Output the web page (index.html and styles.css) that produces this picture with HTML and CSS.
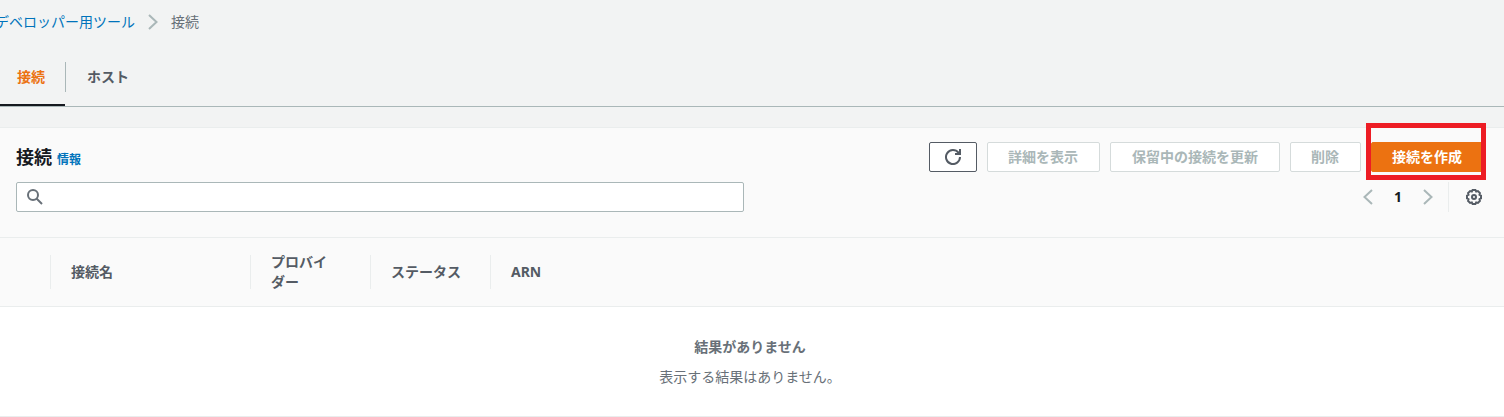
FILE: index.html
```html
<!DOCTYPE html>
<html lang="ja">
<head>
<meta charset="utf-8">
<title>接続</title>
<link rel="stylesheet" href="styles.css">
</head>
<body>
<nav class="breadcrumb" aria-label="パンくずリスト">
  <a href="#tools">デベロッパー用ツール</a>
  <svg class="breadcrumb-arrow" viewBox="0 0 10 16" aria-hidden="true"><path d="M1 1 8.500 8 1 15"/></svg>
  <span>接続</span>
</nav>
<nav class="tabs">
  <a class="tab tab-active" href="#connections" aria-current="page"><span>接続</span></a>
  <a class="tab" href="#hosts"><span>ホスト</span></a>
</nav>
<main class="panel">
  <header class="panel-header">
    <div class="title-row">
      <div class="title">
        <h1>接続</h1>
        <a href="#info">情報</a>
      </div>
      <div class="actions">
        <button class="btn btn-icon" type="button" aria-label="更新">
          <svg class="icon" viewBox="0 0 16 16" aria-hidden="true"><path d="M10 5h5V0M15 8a7 7 0 1 1-1.500-4.300L15 5"/></svg>
        </button>
        <button class="btn" type="button" disabled>詳細を表示</button>
        <button class="btn btn-wide" type="button" disabled>保留中の接続を更新</button>
        <button class="btn" type="button" disabled>削除</button>
        <div class="highlight">
          <button class="btn btn-primary" type="button">接続を作成</button>
        </div>
      </div>
    </div>
    <div class="filter-row">
      <label class="search">
        <svg class="search-icon" viewBox="0 0 16 16" aria-hidden="true"><circle cx="6" cy="6" r="5"/><path d="m9.500 9.500 5.500 5.500"/></svg>
        <input type="search" aria-label="接続を検索">
      </label>
      <div class="pager">
        <button class="pager-btn" type="button" aria-label="前のページ" disabled><svg viewBox="0 0 10 16" aria-hidden="true"><path d="M9 1 1.500 8 9 15"/></svg></button>
        <button class="pager-btn pager-page" type="button">1</button>
        <button class="pager-btn" type="button" aria-label="次のページ" disabled><svg viewBox="0 0 10 16" aria-hidden="true"><path d="M1 1 8.500 8 1 15"/></svg></button>
        <button class="settings" type="button" aria-label="設定">
          <svg class="icon" viewBox="0 0 16 16" aria-hidden="true"><path d="M6.600 1h2.800l.8 1.500 1.700-.4 2 2-.4 1.700 1.500.8v2.800l-1.500.8.4 1.700-2 2-1.700-.4-.8 1.500H6.600l-.8-1.500-1.700.4-2-2 .4-1.700L1 9.400V6.600l1.500-.8-.4-1.700 2-2 1.700.4z"/><circle cx="8" cy="8" r="2"/></svg>
        </button>
      </div>
    </div>
  </header>
  <table class="table">
    <thead>
      <tr>
        <td class="col-select"></td>
        <th class="col-name" scope="col">接続名</th>
        <th class="col-small" scope="col">プロバイ<wbr>ダー</th>
        <th class="col-small" scope="col">ステータス</th>
        <th scope="col">ARN</th>
      </tr>
    </thead>
    <tbody>
      <tr>
        <td class="empty" colspan="5">
          <p class="empty-title">結果がありません</p>
          <p>表示する結果はありません。</p>
        </td>
      </tr>
    </tbody>
  </table>
</main>
</body>
</html>
```
FILE: styles.css
```css
* {
  box-sizing: border-box;
}

body {
  margin: 0;
  background: #f2f3f3;
  color: #545b64;
  font: 14px/20px "Noto Sans", "Noto Sans CJK JP", sans-serif;
  overflow-x: hidden;
}

a {
  color: #0073bb;
  text-decoration: none;
}

button,
input {
  font: inherit;
}

svg {
  display: block;
  fill: none;
  stroke: currentColor;
  stroke-width: 2;
}

.breadcrumb {
  display: flex;
  align-items: center;
  gap: 13px;
  margin-left: -5px;
  padding: 12px 0;
  color: #687078;
}

.breadcrumb-arrow {
  width: 10px;
  height: 16px;
  color: #aab7b8;
}

.tabs {
  display: flex;
  margin-top: 4px;
  border-bottom: 1px solid #aab7b8;
}

.tab {
  padding: 14px 0 12px;
  border-bottom: 2px solid transparent;
  color: #545b64;
  font-weight: 700;
}

.tab span {
  display: block;
  padding: 5px 21px;
}

.tab-active {
  border-bottom-color: #16191f;
  color: #ec7211;
}

.tab-active span {
  padding: 5px 20px 5px 17px;
}

.tab + .tab span {
  border-left: 1px solid #aab7b8;
}

.panel {
  margin-top: 20px;
  border-top: 1px solid #eaeded;
  border-bottom: 1px solid #eaeded;
  background: #fff;
}

.panel-header {
  display: flex;
  flex-direction: column;
  gap: 10px;
  padding: 14px 20px 25px 16px;
  background: #fafafa;
}

.title-row,
.filter-row,
.actions,
.pager {
  display: flex;
  align-items: center;
}

.title-row,
.filter-row {
  justify-content: space-between;
  gap: 20px;
}

.title {
  display: flex;
  align-items: baseline;
  gap: 5px;
}

.title h1 {
  margin: 0;
  color: #16191f;
  font-size: 18px;
  line-height: 24px;
}

.title a {
  font-size: 12px;
  font-weight: 700;
}

.actions {
  gap: 10px;
}

.btn {
  height: 30px;
  padding: 0 21px 0 20px;
  border: 1px solid #545b64;
  border-radius: 2px;
  background: #fff;
  color: #545b64;
  font-weight: 700;
  line-height: 20px;
  white-space: nowrap;
}

.btn:disabled {
  border-color: #d5dbdb;
  color: #aab7b8;
}

.btn-wide {
  padding: 0 21px;
}

.btn-icon {
  padding: 0 15px;
}

.btn-primary {
  border-color: #ec7211;
  background: #ec7211;
  color: #fff;
}

.icon {
  width: 16px;
  height: 16px;
}

.highlight {
  position: relative;
}

.highlight::after {
  content: "";
  position: absolute;
  inset: -19px -2px -8px -5px;
  border: 5px solid #ed1c24;
  pointer-events: none;
}

.search {
  display: flex;
  align-items: center;
  gap: 8px;
  flex: 0 1 728px;
  height: 30px;
  padding: 0 10px;
  border: 1px solid #aab7b8;
  border-radius: 2px;
  background: #fff;
}

.search-icon {
  flex: none;
  width: 16px;
  height: 16px;
  color: #687078;
}

.search input {
  flex: 1;
  min-width: 0;
  padding: 0;
  border: 0;
  outline: 0;
  background: none;
}

.pager-btn,
.settings {
  display: flex;
  align-items: center;
  justify-content: center;
  height: 30px;
  padding: 0;
  border: 0;
  background: none;
  color: #545b64;
}

.pager-btn {
  width: 30px;
}

.pager-btn:disabled {
  color: #aab7b8;
}

.pager-btn svg {
  width: 10px;
  height: 16px;
}

.pager-page {
  color: #16191f;
  font-weight: 700;
}

.settings {
  margin-left: 5px;
  padding: 0 2px 0 17px;
  border-left: 1px solid #eaeded;
}

.table {
  width: 100%;
  border-collapse: separate;
  border-spacing: 0;
  table-layout: fixed;
}

.table thead {
  background: #fafafa;
}

.table thead th,
.table thead td {
  height: 70px;
  padding: 14px 20px 14px 21px;
  border-top: 1px solid #eaeded;
  border-bottom: 1px solid #eaeded;
  text-align: left;
  word-break: keep-all;
}

.table thead th {
  background: linear-gradient(#eaeded, #eaeded) left center / 1px 34px no-repeat;
}

.col-select {
  width: 50px;
}

.col-name {
  width: 200px;
}

.col-small {
  width: 120px;
}

.empty {
  padding: 30px 4px 29px 0;
  color: #687078;
  text-align: center;
}

.empty p {
  margin: 0;
}

.empty .empty-title {
  margin-bottom: 10px;
  font-weight: 700;
}
```
